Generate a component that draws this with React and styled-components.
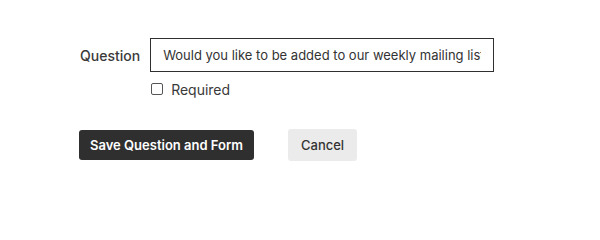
import React from 'react';
import styled, {createGlobalStyle} from 'styled-components';

const GlobalStyle = createGlobalStyle`
  html, body {
    margin: 0;
    padding: 0;
    background: #ffffff;
  }
  body {
    font-family: Inter, "Liberation Sans", Arial, sans-serif;
    color: #333333;
  }
`;

const Page = styled.div`
  width: 600px;
  height: 215px;
  box-sizing: border-box;
  padding: 38px 0 0 79px;
`;

const Field = styled.div`
  display: grid;
  grid-template-columns: auto 344px;
  justify-content: start;
  column-gap: 10px;
  row-gap: 10px;
  align-items: center;
`;

const Label = styled.label`
  font-size: 14px;
  font-weight: 500;
  color: #3a3a3a;
  padding-left: 1px;
`;

const TextInput = styled.input`
  box-sizing: border-box;
  width: 344px;
  height: 34px;
  margin: 0;
  padding: 0 12px;
  border: 1px solid #2f2f2f;
  border-radius: 0;
  font-family: inherit;
  font-size: 13px;
  color: #333333;
  outline: none;
  background: #ffffff;
`;

const CheckRow = styled.label`
  grid-column: 2;
  display: flex;
  align-items: center;
  gap: 8px;
  height: 14px;
  font-size: 14px;
  color: #3a3a3a;
`;

const Box = styled.span`
  box-sizing: border-box;
  width: 12px;
  height: 12px;
  margin-left: 1px;
  border: 1px solid #555555;
  border-radius: 2px;
  background: #ffffff;
`;

const Actions = styled.div`
  display: flex;
  align-items: center;
  gap: 34px;
  margin-top: 33px;
`;

const Button = styled.button`
  box-sizing: border-box;
  height: ${({primary}) => (primary ? '30px' : '32px')};
  padding: 0 ${({primary}) => (primary ? '11px' : '13px')};
  border: none;
  border-radius: 3px;
  font-family: inherit;
  font-size: 13px;
  font-weight: ${({primary}) => (primary ? 600 : 500)};
  color: ${({primary}) => (primary ? '#ffffff' : '#333333')};
  background: ${({primary}) => (primary ? '#2f2f2f' : '#ebebeb')};
  cursor: pointer;
`;

const App = () => (
  <>
    <GlobalStyle />
    <Page>
      <Field>
        <Label htmlFor="question">{'Question'}</Label>
        <TextInput
          id="question"
          readOnly
          value="Would you like to be added to our weekly mailing list?"
        />
        <CheckRow>
          <Box />
          {'Required'}
        </CheckRow>
      </Field>
      <Actions>
        <Button primary>{'Save Question and Form'}</Button>
        <Button>{'Cancel'}</Button>
      </Actions>
    </Page>
  </>
);

export default App;
